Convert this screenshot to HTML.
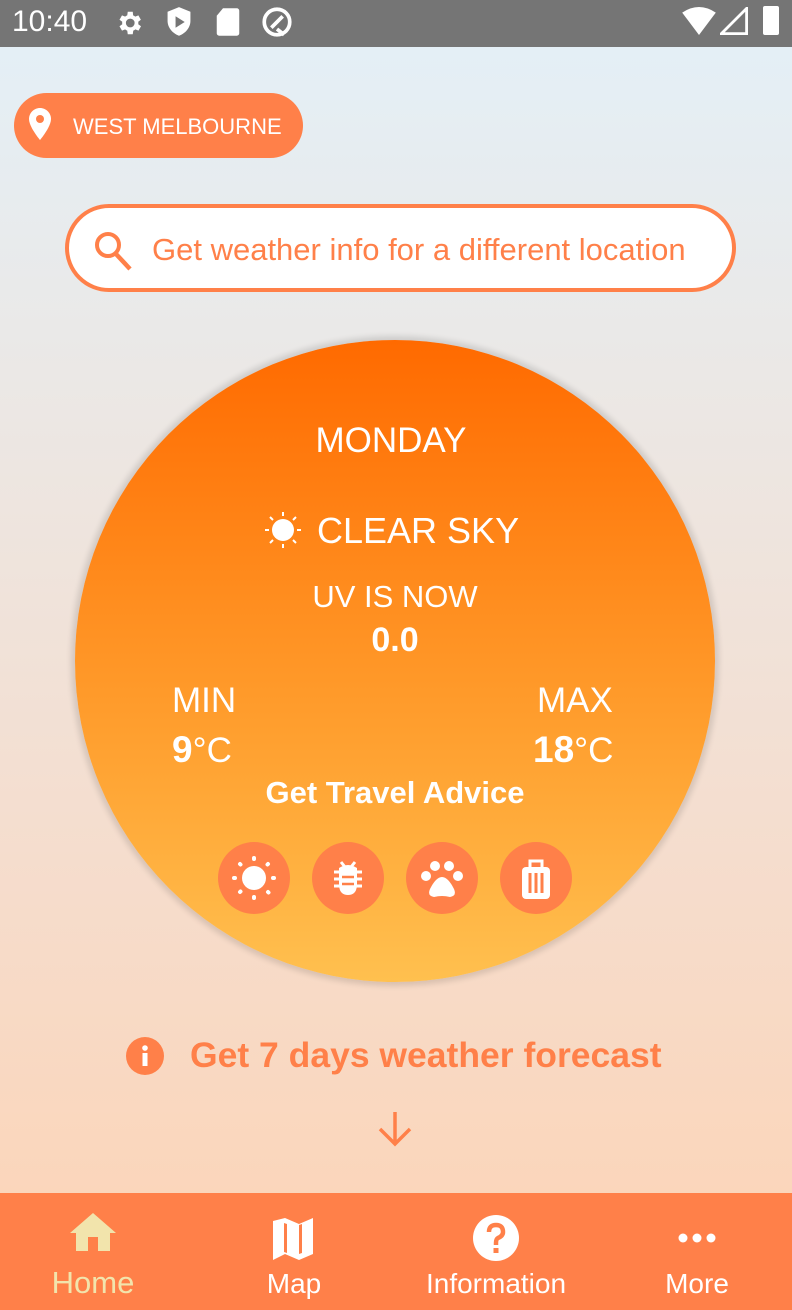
<!DOCTYPE html>
<html><head><meta charset="utf-8"><style>
*{margin:0;padding:0;box-sizing:border-box}
body{width:792px;height:1310px;overflow:hidden;font-family:"Liberation Sans",sans-serif;position:relative;background:linear-gradient(#e4eff6 48px,#eae9e8 330px,#f6dccb 900px,#fbd6bb 1193px)}
.status{position:absolute;top:0;left:0;width:792px;height:47px;background:#757575;color:#fff}
.abs{position:absolute}
.pill{left:14px;top:93px;width:289px;height:65px;border-radius:33px;background:#ff8049;color:#fff;font-size:22px}
.search{left:65px;top:204px;width:671px;height:88px;border:4px solid #ff8049;border-radius:44px;background:#fff;color:#ff8049;font-size:31px}
.circle{left:75px;top:340px;width:640px;height:642px;border-radius:50%;background:linear-gradient(#ff6a00,#ff9a2a 55%,#ffc04f);box-shadow:0 0 6px 4px rgba(0,0,0,.12)}
.w{color:#fff;text-align:center;position:absolute;white-space:nowrap}
.ic{position:absolute;top:842px;width:72px;height:72px;border-radius:50%;background:#ff8049}
.nav{left:0;top:1193px;width:792px;height:117px;background:#ff8049}
.lbl{position:absolute;top:1268px;font-size:28px;color:#fff;transform:translateX(-50%)}
</style></head><body>
<div class="status">
<div class="abs" style="left:12px;top:5px;font-size:30px">10:40</div>
<svg class="abs" style="left:114px;top:8px" width="30" height="30" viewBox="0 0 24 24"><path fill="#fff" d="M19.4 13a7.5 7.5 0 000-2l2.1-1.6-2-3.5-2.5 1a7 7 0 00-1.7-1L15 3h-4l-.4 2.9a7 7 0 00-1.7 1l-2.5-1-2 3.5L6.6 11a7.5 7.5 0 000 2l-2.2 1.6 2 3.5 2.5-1a7 7 0 001.7 1L11 21h4l.4-2.9a7 7 0 001.7-1l2.5 1 2-3.5zM13 15.5a3.5 3.5 0 110-7 3.5 3.5 0 010 7z"/></svg>
<svg class="abs" style="left:165px;top:6px" width="28" height="32" viewBox="0 0 24 28"><path fill="#fff" d="M12 1L2 5v8c0 6 4.5 11 10 13 5.5-2 10-7 10-13V5z"/><path fill="#757575" d="M9 9l8 5-8 5z"/></svg>
<svg class="abs" style="left:215px;top:7px" width="26" height="30" viewBox="0 0 20 24"><path fill="#fff" d="M6 1h11a2 2 0 012 2v18a2 2 0 01-2 2H3a2 2 0 01-2-2V7z"/></svg>
<svg class="abs" style="left:260px;top:5px" width="34" height="34" viewBox="0 0 24 24"><circle cx="12" cy="12" r="9" fill="none" stroke="#fff" stroke-width="2.6"/><path d="M8 16l8-8M12 17l5 4" stroke="#fff" stroke-width="2.6"/></svg>
<svg class="abs" style="left:682px;top:7px" width="34" height="28" viewBox="0 0 24 20"><path fill="#fff" d="M0 4q12-8 24 0L12 20z"/></svg>
<svg class="abs" style="left:720px;top:7px" width="28" height="28" viewBox="0 0 20 20"><path d="M1 19L19 1v18z" fill="none" stroke="#fff" stroke-width="2"/></svg>
<div class="abs" style="left:763px;top:6px;width:16px;height:29px;background:#fff;border-radius:2px"></div>
</div>

<div class="abs pill"><svg class="abs" style="left:15px;top:15px" width="22" height="32" viewBox="0 0 22 32"><path fill="#fff" d="M11 0C5 0 0 5 0 11c0 8 11 21 11 21s11-13 11-21C22 5 17 0 11 0z"/><circle cx="11" cy="11" r="4" fill="#ff8049"/></svg><span class="abs" style="left:59px;top:21px;white-space:nowrap">WEST MELBOURNE</span></div>

<div class="abs search"><svg class="abs" style="left:24px;top:22px" width="40" height="42" viewBox="0 0 40 42"><circle cx="15" cy="15" r="11" fill="none" stroke="#ff8049" stroke-width="4"/><path d="M23 24l14 15" stroke="#ff8049" stroke-width="4.5"/></svg><span class="abs" style="left:83px;top:24px;white-space:nowrap">Get weather info for a different location</span></div>

<div class="abs circle"></div>
<div class="w" style="left:0;width:782px;top:421px;font-size:35px">MONDAY</div>
<svg class="abs" style="left:265px;top:512px" width="36" height="36" viewBox="0 0 36 36"><circle cx="18" cy="18" r="11" fill="#fff"/><g stroke="#fff" stroke-width="2"><path d="M18 0v4M18 32v4M0 18h4M32 18h4M5 5l3 3M28 28l3 3M31 5l-3 3M8 28l-3 3"/></g></svg>
<div class="w" style="left:317px;top:510px;font-size:36px">CLEAR SKY</div>
<div class="w" style="left:0;width:790px;top:579px;font-size:31px">UV IS NOW</div>
<div class="w" style="left:0;width:790px;top:621px;font-size:34px;font-weight:bold">0.0</div>
<div class="w" style="left:172px;top:681px;font-size:35px">MIN</div>
<div class="w" style="left:172px;top:729px;font-size:35px"><b style="font-size:37px">9</b>°C</div>
<div class="w" style="left:537px;top:681px;font-size:35px">MAX</div>
<div class="w" style="left:533px;top:729px;font-size:35px"><b style="font-size:37px">18</b>°C</div>
<div class="w" style="left:0;width:790px;top:775px;font-size:31px;font-weight:bold">Get Travel Advice</div>

<div class="ic" style="left:218px"><svg width="72" height="72" viewBox="0 0 72 72"><circle cx="36" cy="36" r="12" fill="#fff"/><g stroke="#fff" stroke-width="4" stroke-linecap="round"><path d="M36 16v1M36 55v1M16 36h1M55 36h1M22 22l.5.5M50 50l.5.5M50 22l-.5.5M22 50l.5-.5"/></g></svg></div>
<div class="ic" style="left:312px"><svg width="72" height="72" viewBox="0 0 72 72"><path fill="#fff" d="M27 26q9-6 18 0v16q0 11-9 11t-9-11z"/><path stroke="#fff" stroke-width="3" d="M29 20l4 5M43 20l-4 5M22 30h6M44 30h6M22 37h6M44 37h6M22 44h6M44 44h6"/><path stroke="#ff8049" stroke-width="2.5" d="M30 35h12M30 42h12"/></svg></div>
<div class="ic" style="left:406px"><svg width="72" height="72" viewBox="0 0 72 72"><circle cx="29" cy="24" r="5" fill="#fff"/><circle cx="43" cy="24" r="5" fill="#fff"/><circle cx="20" cy="34" r="5" fill="#fff"/><circle cx="52" cy="34" r="5" fill="#fff"/><path fill="#fff" d="M36 35q-6 0-12 12q-3 7 4 8q8-2 16 0q7-1 4-8q-6-12-12-12z"/></svg></div>
<div class="ic" style="left:500px"><svg width="72" height="72" viewBox="0 0 72 72"><rect x="22" y="25" width="28" height="32" rx="4" fill="#fff"/><path d="M30 25v-6h12v6" fill="none" stroke="#fff" stroke-width="3"/><path stroke="#ff8049" stroke-width="3" d="M30 31v20M36 31v20M42 31v20"/></svg></div>

<svg class="abs" style="left:126px;top:1037px" width="38" height="38"><circle cx="19" cy="19" r="19" fill="#ff8049"/><rect x="16.5" y="16" width="5" height="13" fill="#fff"/><circle cx="19" cy="11" r="2.8" fill="#fff"/></svg>
<div class="abs" style="left:190px;top:1035px;font-size:35.5px;font-weight:bold;color:#ff8049;white-space:nowrap">Get 7 days weather forecast</div>
<svg class="abs" style="left:376px;top:1110px" width="38" height="38" viewBox="0 0 38 38"><path d="M19 2v32M4 19l15 15 15-15" fill="none" stroke="#ff8049" stroke-width="3.5"/></svg>

<div class="abs nav"></div>
<svg class="abs" style="left:70px;top:1213px" width="46" height="40" viewBox="0 0 46 40"><path fill="#f2e4ac" d="M23 0L0 20h6v18h12V24h10v14h12V20h6z"/></svg>
<svg class="abs" style="left:271px;top:1217px" width="44" height="44" viewBox="0 0 44 44"><path fill="#fff" d="M2 4l12 -3 14 6 14-6v36l-14 6-14-6-12 6z"/><path fill="#ff8049" d="M13 6v29l3 1V7zM28 8v29l3-1V7z"/></svg>
<svg class="abs" style="left:472px;top:1214px" width="48" height="48" viewBox="0 0 48 48"><circle cx="24" cy="24" r="23" fill="#fff"/><path d="M17 18q0-7 7-7t7 7q0 4-5 6-2 1-2 5v2" fill="none" stroke="#ff8049" stroke-width="4.5"/><rect x="21.5" y="34" width="5" height="5" fill="#ff8049"/></svg>
<svg class="abs" style="left:677px;top:1230px" width="40" height="16"><circle cx="6" cy="8" r="4.5" fill="#fff"/><circle cx="20" cy="8" r="4.5" fill="#fff"/><circle cx="34" cy="8" r="4.5" fill="#fff"/></svg>
<div class="lbl" style="left:93px;color:#f2e4ac;font-size:31px;top:1265px">Home</div>
<div class="lbl" style="left:294px">Map</div>
<div class="lbl" style="left:496px">Information</div>
<div class="lbl" style="left:697px">More</div>
</body></html>
